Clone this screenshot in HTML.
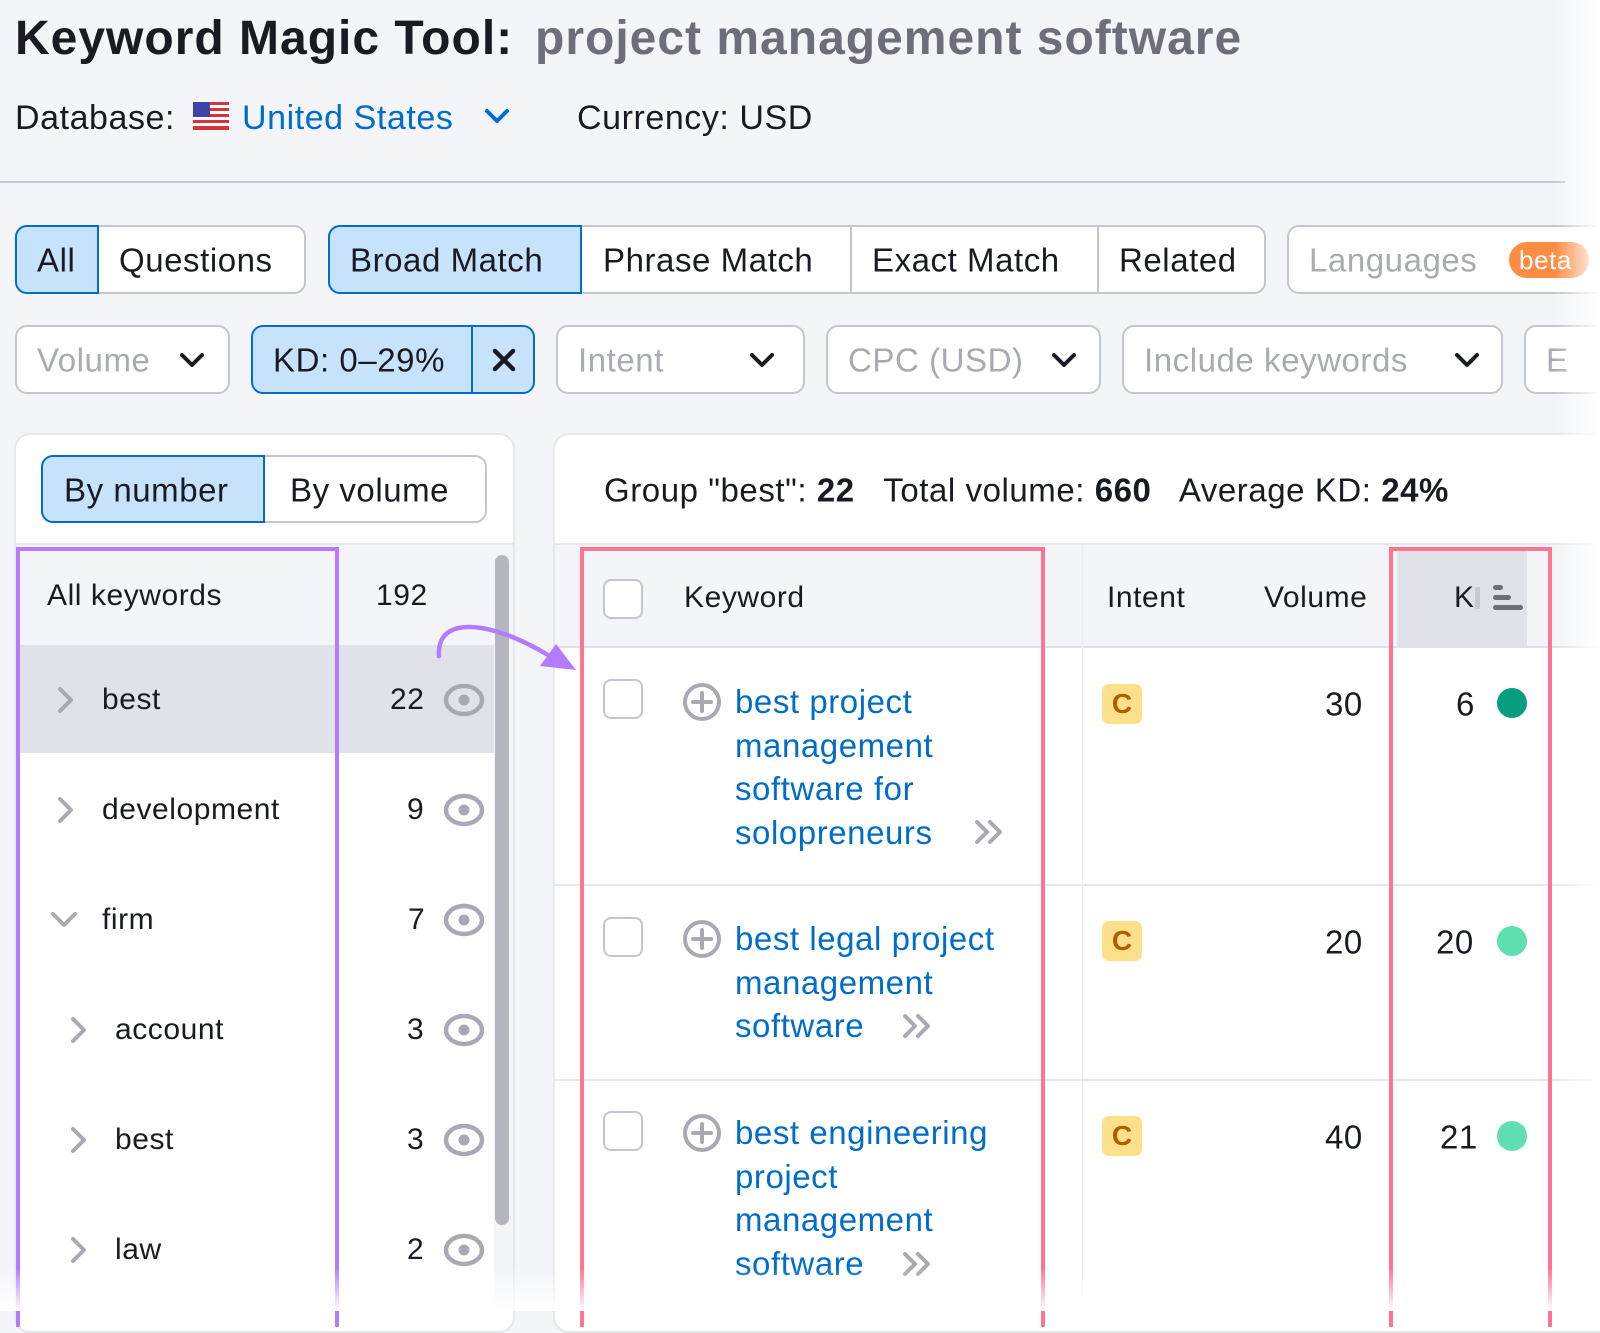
<!DOCTYPE html>
<html><head><meta charset="utf-8"><style>
*{margin:0;padding:0;box-sizing:border-box}
body{width:1600px;height:1311px;overflow:hidden;background:#f4f5f9;font-family:"Liberation Sans",sans-serif;color:#191b23;position:relative;letter-spacing:0.035em}
.a{position:absolute}
.t{position:absolute;white-space:nowrap;line-height:1;transform:translateY(-50%)}
.box{position:absolute;background:#fff;border:2px solid #c4c6cf;border-radius:12px}
.sel{background:#c7e3fb;border-color:#006dca}
.ph{color:#a8aab4}
.kw{position:absolute;color:#006dca;font-size:33px;line-height:43.7px;left:735px}
.badge{position:absolute;width:40px;height:40px;background:#ffe08a;border-radius:7px;color:#b35b00;font-weight:bold;font-size:28px;text-align:center;line-height:40px;letter-spacing:0}
.cb{position:absolute;width:40px;height:40px;border:2px solid #c4c6cf;border-radius:8px;background:#fff;left:603px}
</style></head><body>

<div class="t" style="left:15px;top:39px;font-size:48px;font-weight:bold;letter-spacing:1px">Keyword Magic Tool:</div>
<div class="t" style="left:535px;top:39px;font-size:48px;font-weight:bold;color:#6c6e79;letter-spacing:1px">project management software</div>

<div class="t" style="left:15px;top:118px;font-size:34px">Database:</div>
<svg class="a" style="left:193px;top:102px" width="36" height="28" viewBox="0 0 36 28">
<rect width="36" height="28" fill="#fff"/>
<g fill="#d8323b"><rect y="0" width="36" height="3"/><rect y="6" width="36" height="3"/><rect y="12" width="36" height="3"/><rect y="18" width="36" height="3"/><rect y="24" width="36" height="4"/></g>
<rect width="17" height="15" fill="#3c44a8"/></svg>
<div class="t" style="left:242px;top:118px;font-size:34px;color:#006dca">United States</div>
<svg class="a" style="left:484px;top:106px" width="26" height="20"><polyline points="3,5 13,15 23,5" fill="none" stroke="#006dca" stroke-width="4" stroke-linecap="round" stroke-linejoin="round"/></svg>
<div class="t" style="left:577px;top:118px;font-size:34px">Currency: USD</div>

<div class="a" style="left:0;top:181px;width:1565px;height:2px;background:#c8c9d1"></div>

<!-- tabs -->
<div class="box" style="left:15px;top:225px;width:291px;height:69px"></div>
<div class="box sel" style="left:15px;top:225px;width:84px;height:69px;border-radius:12px 0 0 12px"></div>
<div class="t" style="left:37px;top:260px;font-size:33px">All</div>
<div class="t" style="left:119px;top:260px;font-size:33px">Questions</div>

<div class="box" style="left:328px;top:225px;width:938px;height:69px"></div>
<div class="box sel" style="left:328px;top:225px;width:254px;height:69px;border-radius:12px 0 0 12px"></div>
<div class="a" style="left:850px;top:227px;width:2px;height:65px;background:#c4c6cf"></div>
<div class="a" style="left:1097px;top:227px;width:2px;height:65px;background:#c4c6cf"></div>
<div class="t" style="left:350px;top:260px;font-size:33px">Broad Match</div>
<div class="t" style="left:603px;top:260px;font-size:33px">Phrase Match</div>
<div class="t" style="left:872px;top:260px;font-size:33px">Exact Match</div>
<div class="t" style="left:1119px;top:260px;font-size:33px">Related</div>

<div class="box" style="left:1287px;top:225px;width:340px;height:69px"></div>
<div class="t ph" style="left:1309px;top:260px;font-size:33px">Languages</div>
<div class="a" style="left:1509px;top:242px;width:80px;height:36px;background:#ff8c42;border-radius:18px;color:#fff;font-size:26px;line-height:36px;padding-left:10px">beta</div>

<!-- filters -->
<div class="box" style="left:15px;top:325px;width:215px;height:69px"></div>
<div class="t ph" style="left:37px;top:360px;font-size:33px">Volume</div>
<svg class="a" style="left:179px;top:350px" width="26" height="20"><polyline points="3,5 13,15 23,5" fill="none" stroke="#191b23" stroke-width="4" stroke-linecap="round" stroke-linejoin="round"/></svg>

<div class="box sel" style="left:251px;top:325px;width:284px;height:69px"></div>
<div class="a" style="left:471px;top:327px;width:2px;height:65px;background:#006dca"></div>
<div class="t" style="left:273px;top:360px;font-size:33px">KD: 0–29%</div>
<svg class="a" style="left:491px;top:347px" width="26" height="26"><path d="M4 4L22 22M22 4L4 22" stroke="#191b23" stroke-width="4.5" stroke-linecap="round"/></svg>

<div class="box" style="left:556px;top:325px;width:249px;height:69px"></div>
<div class="t ph" style="left:578px;top:360px;font-size:33px">Intent</div>
<svg class="a" style="left:749px;top:350px" width="26" height="20"><polyline points="3,5 13,15 23,5" fill="none" stroke="#191b23" stroke-width="4" stroke-linecap="round" stroke-linejoin="round"/></svg>

<div class="box" style="left:826px;top:325px;width:275px;height:69px"></div>
<div class="t ph" style="left:848px;top:360px;font-size:33px">CPC (USD)</div>
<svg class="a" style="left:1051px;top:350px" width="26" height="20"><polyline points="3,5 13,15 23,5" fill="none" stroke="#191b23" stroke-width="4" stroke-linecap="round" stroke-linejoin="round"/></svg>

<div class="box" style="left:1122px;top:325px;width:381px;height:69px"></div>
<div class="t ph" style="left:1144px;top:360px;font-size:33px">Include keywords</div>
<svg class="a" style="left:1454px;top:350px" width="26" height="20"><polyline points="3,5 13,15 23,5" fill="none" stroke="#191b23" stroke-width="4" stroke-linecap="round" stroke-linejoin="round"/></svg>
<div class="box" style="left:1524px;top:325px;width:200px;height:69px"></div>
<div class="t ph" style="left:1546px;top:360px;font-size:33px">E</div>

<!-- left panel -->
<div class="a" style="left:14px;top:433px;width:501px;height:900px;background:#fff;border:2px solid #e6e7ec;border-radius:16px"></div>
<div class="box" style="left:41px;top:455px;width:446px;height:68px"></div>
<div class="box sel" style="left:41px;top:455px;width:224px;height:68px;border-radius:12px 0 0 12px"></div>
<div class="t" style="left:64px;top:490px;font-size:33px">By number</div>
<div class="t" style="left:290px;top:490px;font-size:33px">By volume</div>
<div class="a" style="left:16px;top:543px;width:497px;height:2px;background:#e6e7ec"></div>
<div class="a" style="left:16px;top:545px;width:497px;height:100px;background:#f4f5f9"></div>
<div class="a" style="left:16px;top:645px;width:497px;height:108px;background:#e0e1e9"></div>
<div class="a" style="left:494px;top:545px;width:19px;height:766px;background:#f4f5f9"></div>
<div class="a" style="left:495px;top:555px;width:14px;height:670px;background:#b5b6bf;border-radius:7px"></div>

<div class="t" style="left:47px;top:596px;font-size:30px">All keywords</div>
<div class="t" style="left:376px;top:596px;font-size:30px">192</div>

<svg class="a" style="left:0;top:0" width="520" height="1311">
<g fill="none" stroke="#a8a9b3" stroke-width="4" stroke-linecap="round" stroke-linejoin="round">
<polyline points="60,689 71,700 60,711"/>
<polyline points="60,799 71,810 60,821"/>
<polyline points="53,914 64,925 75,914"/>
<polyline points="73,1019 84,1030 73,1041"/>
<polyline points="73,1129 84,1140 73,1151"/>
<polyline points="73,1239 84,1250 73,1261"/>
</g>
<g fill="none" stroke="#a8a9b3" stroke-width="4.5">
<ellipse cx="464" cy="700" rx="18" ry="14"/>
<ellipse cx="464" cy="810" rx="18" ry="14"/>
<ellipse cx="464" cy="920" rx="18" ry="14"/>
<ellipse cx="464" cy="1030" rx="18" ry="14"/>
<ellipse cx="464" cy="1140" rx="18" ry="14"/>
<ellipse cx="464" cy="1250" rx="18" ry="14"/>
</g>
<g fill="#a8a9b3"><circle cx="464" cy="700" r="5.5"/><circle cx="464" cy="810" r="5.5"/><circle cx="464" cy="920" r="5.5"/><circle cx="464" cy="1030" r="5.5"/><circle cx="464" cy="1140" r="5.5"/><circle cx="464" cy="1250" r="5.5"/></g>
</svg>
<div class="t" style="left:102px;top:700px;font-size:30px">best</div>
<div class="t" style="left:390px;top:700px;font-size:30px">22</div>
<div class="t" style="left:102px;top:810px;font-size:30px">development</div>
<div class="t" style="left:407px;top:810px;font-size:30px">9</div>
<div class="t" style="left:102px;top:920px;font-size:30px">firm</div>
<div class="t" style="left:408px;top:920px;font-size:30px">7</div>
<div class="t" style="left:115px;top:1030px;font-size:30px">account</div>
<div class="t" style="left:407px;top:1030px;font-size:30px">3</div>
<div class="t" style="left:115px;top:1140px;font-size:30px">best</div>
<div class="t" style="left:407px;top:1140px;font-size:30px">3</div>
<div class="t" style="left:115px;top:1250px;font-size:30px">law</div>
<div class="t" style="left:407px;top:1250px;font-size:30px">2</div>

<!-- right panel -->
<div class="a" style="left:553px;top:433px;width:1100px;height:900px;background:#fff;border:2px solid #e6e7ec;border-radius:16px"></div>
<div class="t" style="left:604px;top:490px;font-size:33px">Group "best": <b>22</b>&nbsp;&nbsp; Total volume: <b>660</b>&nbsp;&nbsp; Average KD: <b>24%</b></div>
<div class="a" style="left:555px;top:543px;width:1045px;height:2px;background:#e6e7ec"></div>
<div class="a" style="left:555px;top:545px;width:1045px;height:102px;background:#f4f5f9"></div>
<div class="a" style="left:1397px;top:547px;width:130px;height:100px;background:#e0e1e9"></div>
<div class="a" style="left:555px;top:646px;width:1045px;height:2px;background:#e0e1e9"></div>
<div class="a" style="left:555px;top:884px;width:1045px;height:2px;background:#e6e7ec"></div>
<div class="a" style="left:555px;top:1079px;width:1045px;height:2px;background:#e6e7ec"></div>
<div class="a" style="left:1082px;top:545px;width:1px;height:766px;background:#eceef2"></div>
<div class="cb" style="top:579px"></div>
<div class="t" style="left:684px;top:598px;font-size:30px">Keyword</div>
<div class="t" style="left:1107px;top:598px;font-size:30px">Intent</div>
<div class="t" style="left:1264px;top:598px;font-size:30px">Volume</div>
<div class="t" style="left:1454px;top:598px;font-size:30px">K</div>
<svg class="a" style="left:1475px;top:583px" width="52" height="30"><rect x="0" y="4" width="5" height="22" fill="#c8c9d0"/><g fill="#6c6e79"><rect x="18" y="2" width="10" height="5" rx="2.5"/><rect x="18" y="12" width="18" height="5" rx="2.5"/><rect x="18" y="22" width="30" height="5" rx="2.5"/></g></svg>

<svg class="a" style="left:0;top:0" width="1600" height="1311">
<g fill="none" stroke="#a8a9b3" stroke-width="4">
<circle cx="702" cy="702" r="17"/><circle cx="702" cy="939" r="17"/><circle cx="702" cy="1133" r="17"/>
<path d="M702 693V711M693 702H711M702 930V948M693 939H711M702 1124V1142M693 1133H711" stroke-linecap="round"/>
<g stroke-linecap="round" stroke-linejoin="round">
<polyline points="977,822 987,832 977,842"/><polyline points="990,822 1000,832 990,842"/>
<polyline points="905,1016 915,1026 905,1036"/><polyline points="918,1016 928,1026 918,1036"/>
<polyline points="905,1254 915,1264 905,1274"/><polyline points="918,1254 928,1264 918,1274"/>
</g></g>
<circle cx="1512" cy="703" r="15" fill="#079e7f"/>
<circle cx="1512" cy="941" r="15" fill="#5ddfb0"/>
<circle cx="1512" cy="1136" r="15" fill="#5ddfb0"/>
</svg>

<div class="cb" style="top:679px"></div>
<div class="cb" style="top:917px"></div>
<div class="cb" style="top:1111px"></div>
<div class="kw" style="top:680px">best project<br>management<br>software for<br>solopreneurs</div>
<div class="kw" style="top:917px">best legal project<br>management<br>software</div>
<div class="kw" style="top:1111px">best engineering<br>project<br>management<br>software</div>

<div class="badge" style="left:1102px;top:684px">C</div>
<div class="badge" style="left:1102px;top:921px">C</div>
<div class="badge" style="left:1102px;top:1116px">C</div>
<div class="t" style="left:1325px;top:704px;font-size:33px">30</div>
<div class="t" style="left:1325px;top:942px;font-size:33px">20</div>
<div class="t" style="left:1325px;top:1137px;font-size:33px">40</div>
<div class="t" style="left:1456px;top:704px;font-size:33px">6</div>
<div class="t" style="left:1436px;top:942px;font-size:33px">20</div>
<div class="t" style="left:1440px;top:1137px;font-size:33px">21</div>

<!-- highlight boxes -->
<div class="a" style="left:16px;top:547px;width:323px;height:780px;border:4px solid #b57bff;border-bottom:none"></div>
<div class="a" style="left:580px;top:547px;width:465px;height:780px;border:4px solid #ff7393;border-bottom:none"></div>
<div class="a" style="left:1389px;top:547px;width:163px;height:780px;border:4px solid #ff7393;border-bottom:none"></div>

<svg class="a" style="left:0;top:0" width="600" height="700">
<path d="M439 656 C436 615 490 620 548 655" fill="none" stroke="#b57bff" stroke-width="4.5" stroke-linecap="round"/>
<path d="M576 670 L540 666 L556 644 Z" fill="#b57bff"/>
</svg>

<div class="a" style="left:0;top:1268px;width:1600px;height:43px;background:linear-gradient(rgba(255,255,255,0),#fff)"></div>
<div class="a" style="left:1555px;top:0;width:45px;height:1311px;background:linear-gradient(90deg,rgba(255,255,255,0),#fff)"></div>
</body></html>
